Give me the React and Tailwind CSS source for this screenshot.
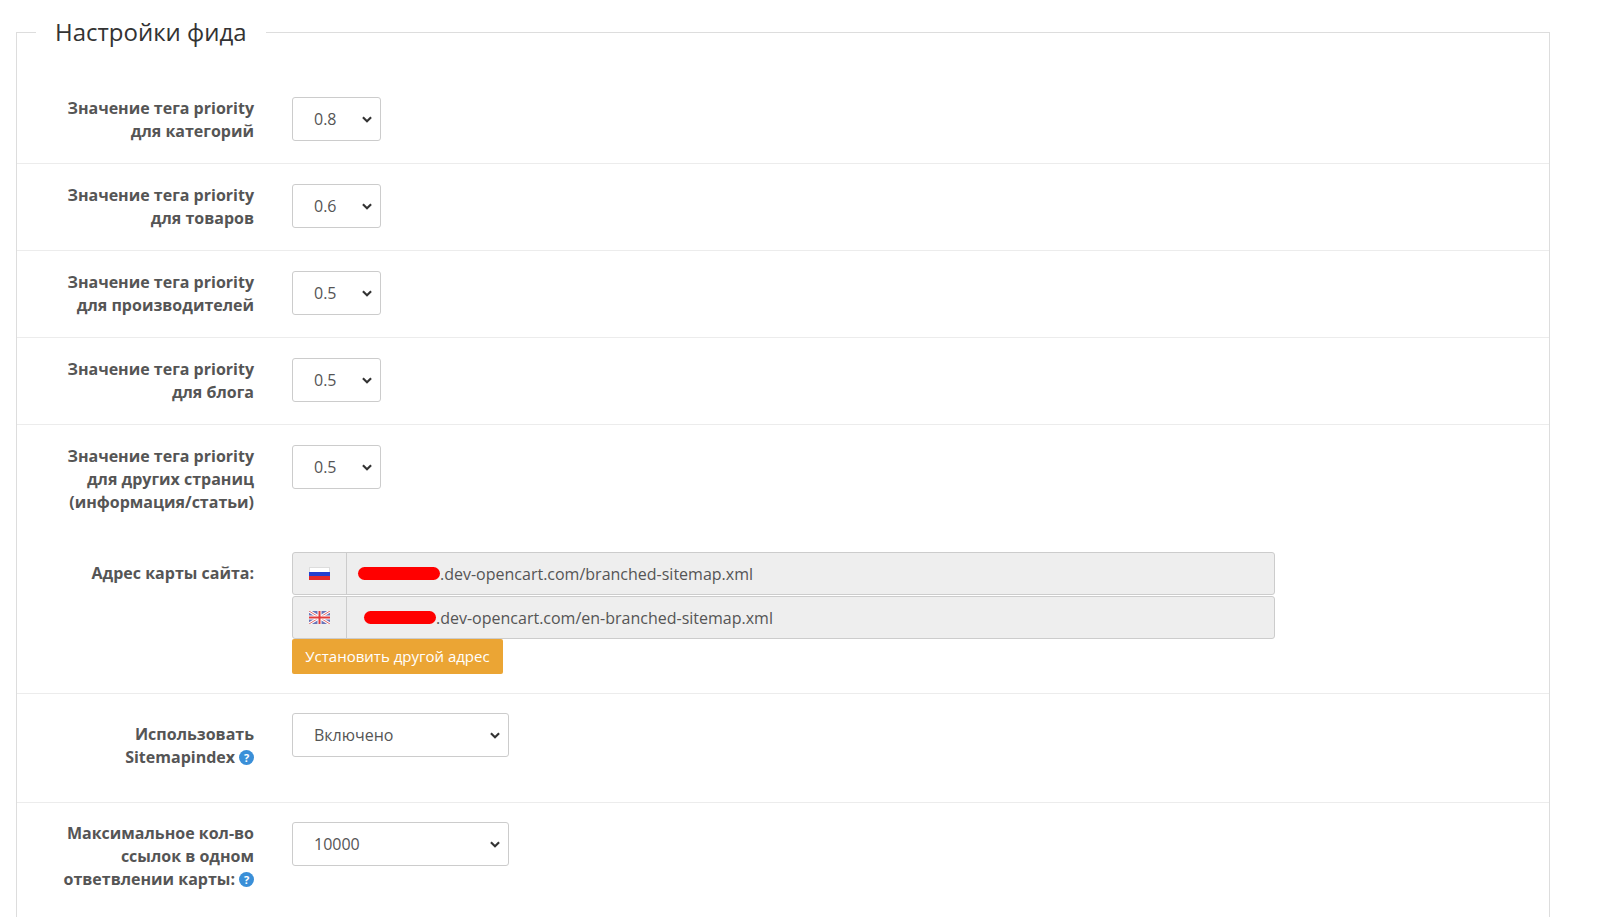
const font = { fontFamily: '"Open Sans", sans-serif' };

const Chevron = () => (
  <svg className="w-[14px] h-[14px] text-[#333]" viewBox="0 0 12 12" fill="none" stroke="currentColor" strokeWidth="1.8">
    <path d="M2.5 4.5 6 8l3.5-3.5" />
  </svg>
);

const Select = ({ value, w = "w-[89px]" }) => (
  <div className={`${w} h-[44px] border border-[#ccc] rounded-[3px] bg-white flex items-center justify-between pl-[21px] pr-[6px] text-[16px] text-[#555]`}>
    <span>{value}</span>
    <Chevron />
  </div>
);

const Help = () => (
  <span className="inline-flex items-center justify-center w-[15px] h-[15px] rounded-full bg-[#3a8fd8] text-white text-[11px] font-bold ml-[4px] align-[1px]">?</span>
);

const Row = ({ label, children, border = true, py = "py-[20px]" }) => (
  <div className={`flex ${py} ${border ? "border-b border-[#ececec]" : ""}`}>
    <div className="w-[237px] text-right font-bold text-[16px] leading-[23px] text-[#555]">{label}</div>
    <div className="pl-[38px] flex-1">{children}</div>
  </div>
);

const RuFlag = () => (
  <div className="w-[21px] h-[13px] flex flex-col">
    <div className="flex-1 bg-white border border-[#ddd] border-b-0" />
    <div className="flex-1 bg-[#2340d0]" />
    <div className="flex-1 bg-[#e52b2b]" />
  </div>
);

const GbFlag = () => (
  <svg width="21" height="13" viewBox="0 0 21 13">
    <rect width="21" height="13" fill="#6a75b8" />
    <path d="M0 0 21 13M21 0 0 13" stroke="#fff" strokeWidth="3" />
    <path d="M0 0 21 13M21 0 0 13" stroke="#e26a6a" strokeWidth="1" />
    <path d="M10.5 0v13M0 6.5h21" stroke="#fff" strokeWidth="4" />
    <path d="M10.5 0v13M0 6.5h21" stroke="#e23b3b" strokeWidth="2" />
  </svg>
);

const UrlInput = ({ flag, text, blurW }) => (
  <div className="flex w-[983px] h-[43px] border border-[#ccc] rounded-[3px] bg-[#eee] text-[16px] text-[#555]">
    <div className="w-[54px] flex items-center justify-center border-r border-[#ccc]">{flag}</div>
    <div className="flex items-center pl-[11px]">
      <span className={`${blurW} h-[13px] rounded-full bg-[#ff0000]`} />
      <span>{text}</span>
    </div>
  </div>
);

export default function App() {
  return (
    <div className="bg-white w-[1600px] h-[919px] pt-[17px] pl-[16px]" style={font}>
      <fieldset className="w-[1534px] border border-[#ddd] border-b-0 h-[900px] px-0 pt-0">
        <legend className="ml-[19px] px-[19px] text-[24px] text-[#333] leading-[30px]">Настройки фида</legend>
        <div className="pt-[30px]">
          {[
            ["Значение тега priority", "для категорий", "0.8"],
            ["Значение тега priority", "для товаров", "0.6"],
            ["Значение тега priority", "для производителей", "0.5"],
            ["Значение тега priority", "для блога", "0.5"],
          ].map(([a, b, v], i) => (
            <Row key={i} label={<>{a}<br />{b}</>}>
              <Select value={v} />
            </Row>
          ))}
          <Row border={false} py="pt-[20px] pb-[16px]" label={<>Значение тега priority<br />для других страниц<br />(информация/статьи)</>}>
            <Select value="0.5" />
          </Row>
          <Row py="pt-[22px] pb-[19px]" label={<div className="pt-[10px]">Адрес карты сайта:</div>}>
            <div className="flex flex-col gap-[1px]">
              <UrlInput flag={<RuFlag />} text=".dev-opencart.com/branched-sitemap.xml" blurW="w-[82px]" />
              <UrlInput flag={<GbFlag />} text=".dev-opencart.com/en-branched-sitemap.xml" blurW="w-[72px] ml-[6px]" />
              <button className="w-[211px] h-[35px] bg-[#eba534] text-white text-[15px] rounded-[2px] -mt-[1px]">Установить другой адрес</button>
            </div>
          </Row>
          <Row py="pt-[19px] pb-[33px]" label={<div className="pt-[10px]">Использовать<br />Sitemapindex<Help /></div>}>
            <Select value="Включено" w="w-[217px]" />
          </Row>
          <Row border={false} py="pt-[19px]" label={<>Максимальное кол-во<br />ссылок в одном<br />ответвлении карты:<Help /></>}>
            <Select value="10000" w="w-[217px]" />
          </Row>
        </div>
      </fieldset>
    </div>
  );
}
